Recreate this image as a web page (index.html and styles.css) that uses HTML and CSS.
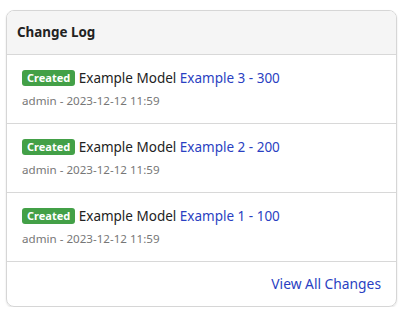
FILE: index.html
```html
<!DOCTYPE html>
<html lang="en">

<head>
    <meta charset="UTF-8">
    <meta name="viewport" content="width=device-width, initial-scale=1.0">
    <title>Change Log</title>
    <link rel="stylesheet" href="styles.css">
</head>

<body>
    <div class="card">
        <div class="card-header">Change Log</div>
        <div class="log-item">
            <div class="log-title">
                <span class="badge">Created</span>
                Example Model <a href="#">Example 3 - 300</a>
            </div>
            <div class="log-meta">admin - 2023-12-12 11:59</div>
        </div>
        <div class="log-item">
            <div class="log-title">
                <span class="badge">Created</span>
                Example Model <a href="#">Example 2 - 200</a>
            </div>
            <div class="log-meta">admin - 2023-12-12 11:59</div>
        </div>
        <div class="log-item">
            <div class="log-title">
                <span class="badge">Created</span>
                Example Model <a href="#">Example 1 - 100</a>
            </div>
            <div class="log-meta">admin - 2023-12-12 11:59</div>
        </div>
        <div class="card-footer">
            <a href="#">View All Changes</a>
        </div>
    </div>
</body>

</html>
```

FILE: styles.css
```css
body {
    margin: 0;
    padding: 10px 8px 0 6px;
    font-family: "Noto Sans", "Open Sans", sans-serif;
    font-size: 14px;
    color: #222;
    background: #fff;
}

a {
    color: #2a3fc2;
    text-decoration: none;
}

.card {
    border: 1px solid #d6d6d6;
    border-radius: 8px;
    overflow: hidden;
    box-shadow: 0 1px 2px rgba(0, 0, 0, 0.12);
}

.card-header {
    height: 43px;
    line-height: 43px;
    padding-left: 10px;
    background: #f5f5f5;
    border-bottom: 1px solid #d8d8d8;
    font-size: 13.4px;
    font-weight: bold;
}

.log-item {
    height: 69px;
    padding: 0 15px;
    border-bottom: 1px solid #d8d8d8;
    box-sizing: border-box;
}

.log-title {
    padding-top: 12px;
    line-height: 22px;
    font-size: 13.5px;
}

.badge {
    display: inline-block;
    background: #43a047;
    color: #fff;
    font-size: 11px;
    font-weight: bold;
    line-height: 16px;
    padding: 0 5px;
    border-radius: 3px;
    vertical-align: 1px;
}

.log-meta {
    margin-top: 4px;
    font-size: 11.6px;
    color: #777;
}

.card-footer {
    height: 44px;
    line-height: 44px;
    text-align: right;
    padding-right: 15px;
    font-size: 13.8px;
}
```
